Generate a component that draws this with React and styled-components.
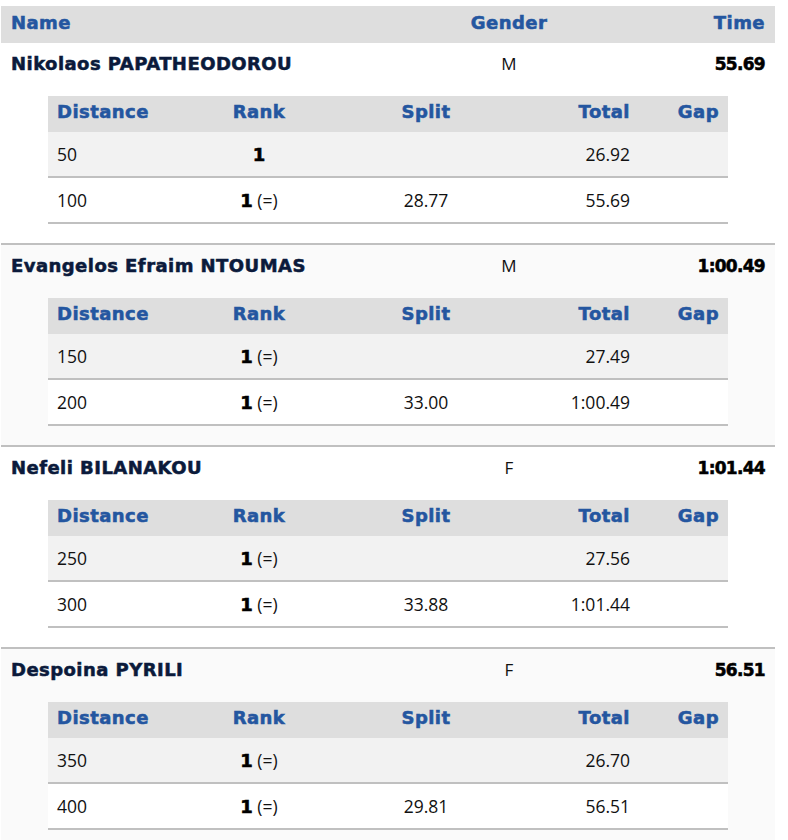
import React from "react";
import styled, { createGlobalStyle } from "styled-components";

const Global = createGlobalStyle`
  html, body { margin: 0; padding: 0; background: #ffffff; }
  body { font-family: "Open Sans", "Noto Sans", "Liberation Sans", sans-serif; color: #111; }
`;

const heavy = `"DejaVu Sans", "Liberation Sans", sans-serif`;

const Page = styled.div`
  padding: 6px 13px 0 1px;
  width: 774px;
`;

const OuterGrid = styled.div`
  display: grid;
  grid-template-columns: 439px 138px 197px;
  align-items: center;
`;

const OuterHead = styled(OuterGrid)`
  height: 32px;
  padding-bottom: 5px;
  background: #dedede;
`;

const HeadCell = styled.div`
  font-family: ${heavy};
  font-weight: 700;
  font-size: 18px;
  letter-spacing: 0.45px;
  -webkit-text-stroke: 0.55px currentColor;
  color: #2456a0;
  padding: 0 10px;
  white-space: nowrap;
  text-align: ${(p) => p.$align || "left"};
`;

const Athlete = styled.section`
  background: ${(p) => (p.$alt ? "#fafafa" : "#ffffff")};
  border-bottom: 2px solid #c0c0c0;
  padding: 0 47px 19px 47px;
`;

const AthleteLine = styled(OuterGrid)`
  height: 41px;
  padding-bottom: 1px;
  margin: 0 -47px 11px -47px;
`;

const NameCell = styled.div`
  font-family: ${heavy};
  font-weight: 700;
  font-size: 18px;
  letter-spacing: 0.45px;
  -webkit-text-stroke: 0.55px currentColor;
  color: #0b1a3b;
  padding: 0 10px;
  white-space: nowrap;
`;

const GenderCell = styled.div`
  font-size: 17px;
  text-align: center;
  color: #111;
`;

const TimeCell = styled.div`
  font-family: ${heavy};
  font-weight: 700;
  font-size: 17px;
  letter-spacing: -0.7px;
  -webkit-text-stroke: 0.55px currentColor;
  color: #000;
  text-align: right;
  padding: 0 10px;
`;

const SplitGrid = styled.div`
  display: grid;
  grid-template-columns: 122px 178px 156px 135px 89px;
  align-items: center;
`;

const SplitHead = styled(SplitGrid)`
  height: 31px;
  padding-bottom: 5px;
  background: #dedede;
`;

const SplitRow = styled(SplitGrid)`
  height: 43px;
  padding-bottom: 1px;
  background: ${(p) => (p.$odd ? "#f2f2f2" : "#ffffff")};
  border-bottom: 2px solid #c0c0c0;
`;

const SplitHeadCell = styled(HeadCell)`
  padding: 0 9px;
`;

const Cell = styled.div`
  font-size: 17.5px;
  color: #111;
  padding: 0 9px;
  white-space: nowrap;
  text-align: ${(p) => p.$align || "left"};
`;

const RankNum = styled.span`
  font-family: ${heavy};
  font-weight: 700;
  font-size: 18px;
  -webkit-text-stroke: 0.6px currentColor;
  color: #000;
`;

const data = [
  {
    name: "Nikolaos PAPATHEODOROU",
    gender: "M",
    time: "55.69",
    splits: [
      { d: "50", tie: false, split: "", total: "26.92" },
      { d: "100", tie: true, split: "28.77", total: "55.69" },
    ],
  },
  {
    name: "Evangelos Efraim NTOUMAS",
    gender: "M",
    time: "1:00.49",
    splits: [
      { d: "150", tie: true, split: "", total: "27.49" },
      { d: "200", tie: true, split: "33.00", total: "1:00.49" },
    ],
  },
  {
    name: "Nefeli BILANAKOU",
    gender: "F",
    time: "1:01.44",
    splits: [
      { d: "250", tie: true, split: "", total: "27.56" },
      { d: "300", tie: true, split: "33.88", total: "1:01.44" },
    ],
  },
  {
    name: "Despoina PYRILI",
    gender: "F",
    time: "56.51",
    splits: [
      { d: "350", tie: true, split: "", total: "26.70" },
      { d: "400", tie: true, split: "29.81", total: "56.51" },
    ],
  },
];

export default function App() {
  return (
    <>
      <Global />
      <Page>
        <OuterHead>
          <HeadCell>Name</HeadCell>
          <HeadCell $align="center">Gender</HeadCell>
          <HeadCell $align="right">Time</HeadCell>
        </OuterHead>
        {data.map((a, i) => (
          <Athlete key={a.name} $alt={i % 2 === 1}>
            <AthleteLine>
              <NameCell>{a.name}</NameCell>
              <GenderCell>{a.gender}</GenderCell>
              <TimeCell>{a.time}</TimeCell>
            </AthleteLine>
            <SplitHead>
              <SplitHeadCell>Distance</SplitHeadCell>
              <SplitHeadCell $align="center">Rank</SplitHeadCell>
              <SplitHeadCell $align="center">Split</SplitHeadCell>
              <SplitHeadCell $align="right">Total</SplitHeadCell>
              <SplitHeadCell $align="right">Gap</SplitHeadCell>
            </SplitHead>
            {a.splits.map((s, j) => (
              <SplitRow key={s.d} $odd={j % 2 === 0}>
                <Cell>{s.d}</Cell>
                <Cell $align="center">
                  <RankNum>1</RankNum>
                  {s.tie ? " (=)" : ""}
                </Cell>
                <Cell $align="center">{s.split}</Cell>
                <Cell $align="right">{s.total}</Cell>
                <Cell $align="right"></Cell>
              </SplitRow>
            ))}
          </Athlete>
        ))}
      </Page>
    </>
  );
}
